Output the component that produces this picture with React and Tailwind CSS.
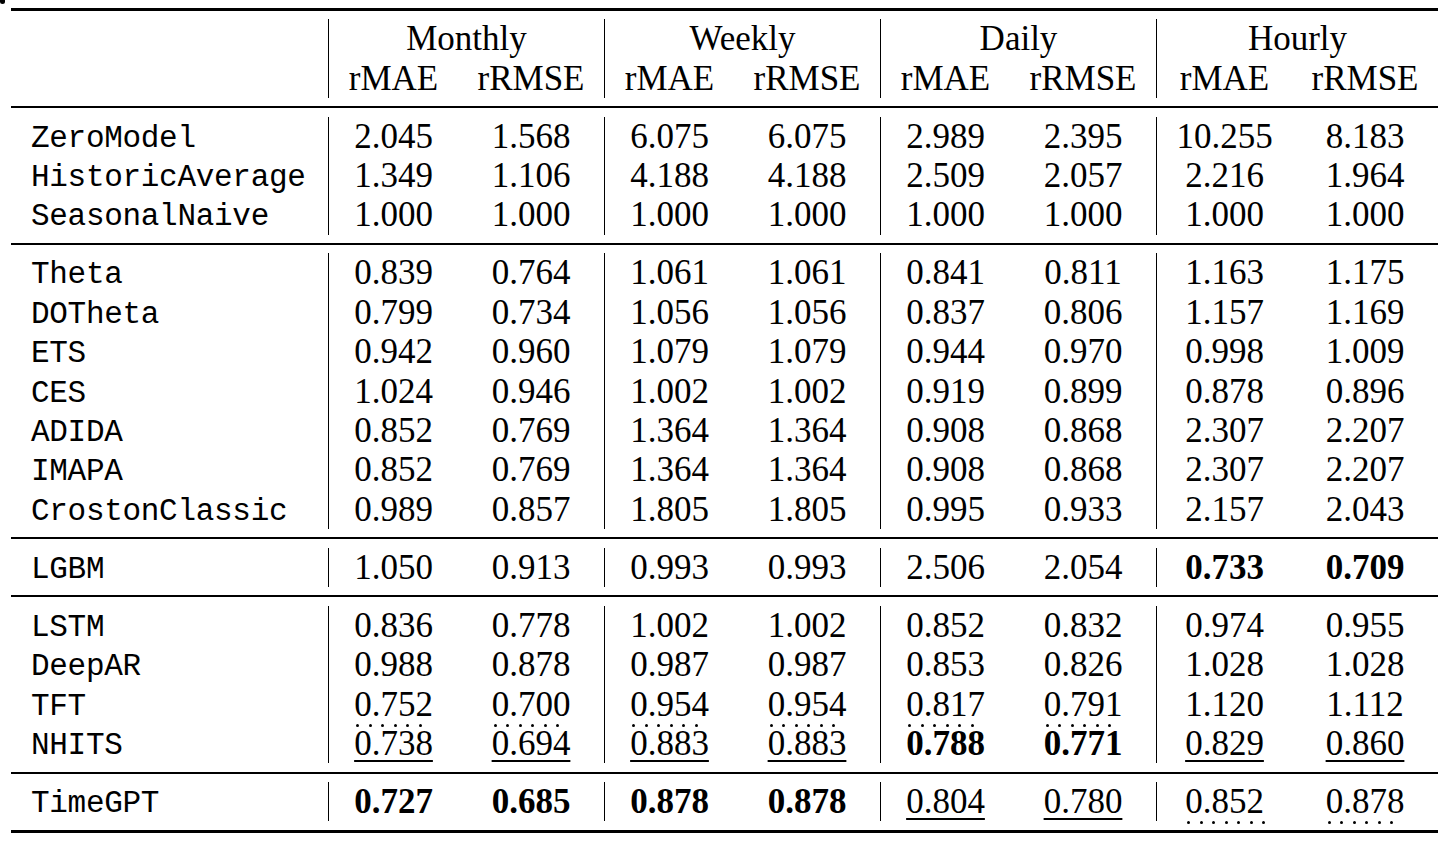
import React from "react";

const serif = "font-['Liberation_Serif','Times_New_Roman',serif]";
const mono = "font-['Liberation_Mono','Courier_New',monospace]";
const cols = "grid grid-cols-[317px_130px_146px_130px_146px_130px_146px_136px_146px] auto-rows-[39.4px]";

// B bold, U solid underline, D dotted underline (n dots)
const B = (v) => ({ v, bold: true });
const U = (v) => ({ v, under: true });
const D = (v, n = 6) => ({ v, dots: n });

const blocks = [
  [
    ["ZeroModel", ["2.045", "1.568", "6.075", "6.075", "2.989", "2.395", "10.255", "8.183"]],
    ["HistoricAverage", ["1.349", "1.106", "4.188", "4.188", "2.509", "2.057", "2.216", "1.964"]],
    ["SeasonalNaive", ["1.000", "1.000", "1.000", "1.000", "1.000", "1.000", "1.000", "1.000"]],
  ],
  [
    ["Theta", ["0.839", "0.764", "1.061", "1.061", "0.841", "0.811", "1.163", "1.175"]],
    ["DOTheta", ["0.799", "0.734", "1.056", "1.056", "0.837", "0.806", "1.157", "1.169"]],
    ["ETS", ["0.942", "0.960", "1.079", "1.079", "0.944", "0.970", "0.998", "1.009"]],
    ["CES", ["1.024", "0.946", "1.002", "1.002", "0.919", "0.899", "0.878", "0.896"]],
    ["ADIDA", ["0.852", "0.769", "1.364", "1.364", "0.908", "0.868", "2.307", "2.207"]],
    ["IMAPA", ["0.852", "0.769", "1.364", "1.364", "0.908", "0.868", "2.307", "2.207"]],
    ["CrostonClassic", ["0.989", "0.857", "1.805", "1.805", "0.995", "0.933", "2.157", "2.043"]],
  ],
  [["LGBM", ["1.050", "0.913", "0.993", "0.993", "2.506", "2.054", B("0.733"), B("0.709")]]],
  [
    ["LSTM", ["0.836", "0.778", "1.002", "1.002", "0.852", "0.832", "0.974", "0.955"]],
    ["DeepAR", ["0.988", "0.878", "0.987", "0.987", "0.853", "0.826", "1.028", "1.028"]],
    ["TFT", [D("0.752"), D("0.700"), D("0.954"), D("0.954"), D("0.817"), D("0.791"), "1.120", "1.112"]],
    ["NHITS", [U("0.738"), U("0.694"), U("0.883"), U("0.883"), B("0.788"), B("0.771"), U("0.829"), U("0.860")]],
  ],
  [["TimeGPT", [B("0.727"), B("0.685"), B("0.878"), B("0.878"), U("0.804"), U("0.780"), D("0.852", 7), D("0.878", 6)]]],
];

function Value({ cell }) {
  const c = typeof cell === "string" ? { v: cell } : cell;
  if (c.dots) {
    return (
      <span className="relative inline-block leading-none">
        {c.v}
        <span className="absolute left-[2px] top-[37px] flex gap-[9.5px]">
          {Array.from({ length: c.dots }).map((_, i) => (
            <span key={i} className="w-[3px] h-[3px] rounded-full bg-black" />
          ))}
        </span>
      </span>
    );
  }
  if (c.under) return <span className="underline decoration-[1.6px] underline-offset-[5px]">{c.v}</span>;
  if (c.bold) return <span className="font-bold">{c.v}</span>;
  return <span>{c.v}</span>;
}

function Cell({ children, edge }) {
  return (
    <div className={`text-center leading-[39.4px] ${edge ? "border-l-[1.5px] border-black" : ""}`}>{children}</div>
  );
}

export default function App() {
  return (
    <div className={`relative min-h-screen bg-white text-black ${serif} text-[35px]`}>
      <span className="absolute left-0 top-0 w-[5px] h-[4px] rounded-b-full bg-black" />
      <div className="ml-[11px] w-[1427px] pt-[8px]">
        <div className="h-[3px] bg-black" />

        <div className={`${cols} py-[8.3px]`}>
          <div />
          {["Monthly", "Weekly", "Daily", "Hourly"].map((g) => (
            <div key={g} className="col-span-2 text-center leading-[39.4px] border-l-[1.5px] border-black">
              {g}
            </div>
          ))}
          <div />
          {["rMAE", "rRMSE", "rMAE", "rRMSE", "rMAE", "rRMSE", "rMAE", "rRMSE"].map((h, i) => (
            <Cell key={i} edge={i % 2 === 0}>
              {h}
            </Cell>
          ))}
        </div>

        {blocks.map((rows, bi) => (
          <div key={bi}>
            <div className="h-[2px] bg-black" />
            <div className={`${cols} py-[8.3px]`}>
              {rows.map(([name, vals]) => (
                <React.Fragment key={name}>
                  <div className={`${mono} text-[31px] tracking-[-0.3px] leading-[39.4px] pl-[20px] pt-[2px] whitespace-nowrap`}>
                    {name}
                  </div>
                  {vals.map((v, i) => (
                    <Cell key={i} edge={i % 2 === 0}>
                      <Value cell={v} />
                    </Cell>
                  ))}
                </React.Fragment>
              ))}
            </div>
          </div>
        ))}

        <div className="h-[3px] bg-black" />
      </div>
    </div>
  );
}
